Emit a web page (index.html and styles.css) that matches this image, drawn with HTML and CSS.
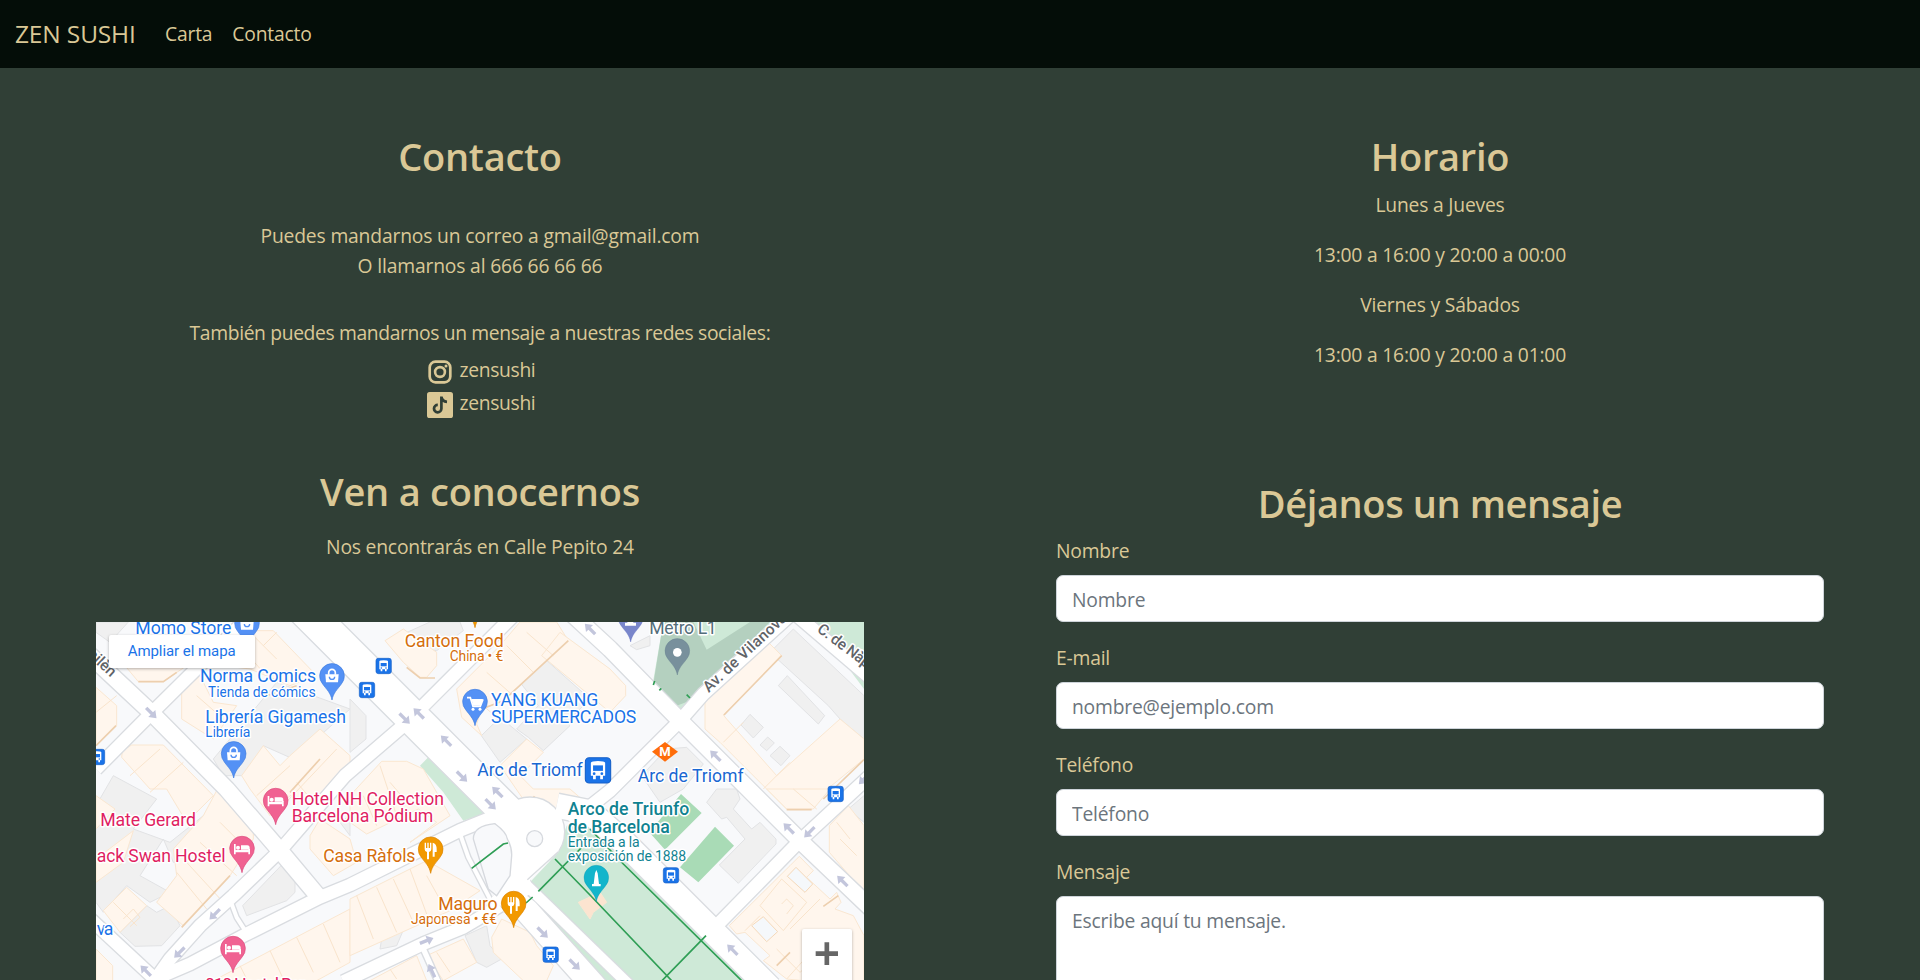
FILE: index.html
```html
<!DOCTYPE html>
<html lang="es">
<head>
<meta charset="utf-8">
<title>Zen Sushi - Contacto</title>
<link rel="stylesheet" href="styles.css">
</head>
<body>
<nav class="navbar">
  <a class="brand">ZEN SUSHI</a>
  <a class="nav-link">Carta</a>
  <a class="nav-link">Contacto</a>
</nav>
<main class="columns">
  <div class="column">
    <section class="contact">
      <h1>Contacto</h1>
      <div class="contact-lines">
        <p>Puedes mandarnos un correo a gmail@gmail.com</p>
        <p>O llamarnos al 666 66 66 66</p>
      </div>
      <p class="social-intro">También puedes mandarnos un mensaje a nuestras redes sociales:</p>
      <div class="social">
        <svg class="social-icon" viewBox="0 0 26 26"><g fill="none" stroke="#dac896"><rect x="2.7" y="2.7" width="20.6" height="20.6" rx="5.8" stroke-width="2.7"/><circle cx="13" cy="13" r="4.9" stroke-width="2.6"/></g><circle cx="19" cy="7" r="1.5" fill="#dac896"/></svg>
        <span>zensushi</span>
      </div>
      <div class="social">
        <svg class="social-icon" viewBox="0 0 26 26"><rect width="26" height="26" rx="2.6" fill="#dac896"/><path d="M14.4 4.600v12.200a3.700 3.700 0 1 1-3.600-3.900M14.400 4.800c.4 2.900 2.500 4.800 5.600 5" fill="none" stroke="#303f36" stroke-width="2.7"/></svg>
        <span>zensushi</span>
      </div>
    </section>
    <section class="visit">
      <h1>Ven a conocernos</h1>
      <p class="address">Nos encontrarás en Calle Pepito 24</p>
      <svg class="map" viewBox="18 39 2304 1074">
        <defs>
          <g id="roads" fill="none" stroke-linejoin="round">
            <path class="w40" d="M18 480L185 312L480 20"/>
            <path class="w48" d="M-20 120L185 312L410 540L570 725L688 866"/>
            <path class="w100" d="M640 -2L780 138L1017 375L1300 658"/>
            <path class="w40" d="M1280 10L1000 290L930 358L765 500L570 725L430 860L330 950L240 1050L190 1120"/>
            <path class="w40" d="M190 1112L300 1065L470 975L688 866L780 828L1110 664L1220 620"/>
            <path class="w40" d="M-10 920L200 1115"/>
            <path class="w12" d="M425 885L440 925L472 975"/>
            <path class="w40" d="M760 1118L1000 1004L1120 955L1230 890"/>
            <path class="w16" d="M1000 1020L1045 1120"/>
            <path class="w12" d="M1112 680L1135 745L1205 880"/>
            <path class="w32" d="M1290 810L1620 1130"/>
            <path class="w72" d="M1225 840L1310 905L1520 1140"/>
            <path class="w72" d="M1400 590L1500 610L1600 698L1840 938L2040 1138"/>
            <path class="w40" d="M2110 10L1840 255L1770 335L1560 545L1440 640"/>
            <path class="w48" d="M1430 0L1560 120L1770 335L2130 695L2350 905"/>
            <path class="w40" d="M2340 500L2130 695L1880 950"/>
            <path class="w40" d="M2110 10L2350 215"/>
          </g>
          <path id="pin" d="M0 0C-4 -22 -16 -31 -28 -48A37 37 0 1 1 28 -48C16 -31 4 -22 0 0Z"/>
          <g id="bag" fill="#fff"><path d="M-20 -77H20L18 -53H-18Z"/><path d="M-10 -76v-6a10 10 0 0 1 20 0v6" fill="none" stroke="#fff" stroke-width="5"/><path d="M-8 -70a8 8 0 0 0 16 0" fill="none" stroke="#5491f5" stroke-width="4"/></g>
          <g id="bed" fill="#fff"><path d="M-24 -86h5v18h38v-3h5v16h-5v-6h-38v6h-5z"/><circle cx="-12" cy="-75" r="6"/><path d="M-3 -82H16q7 0 7 8v5H-3z"/></g>
          <g id="fork" fill="#fff"><path d="M-18 -92h4v16h4v-16h4v16h4v-16h4v20q0 6 -7 8v22h-6v-22q-7 -2 -7 -8zM6 -50v-42q12 2 12 20v8h-6v14z"/></g>
          <g id="bus"><rect x="-23" y="-23" width="46" height="46" rx="7" fill="#1a73e8" stroke="#1660c8" stroke-width="2"/><path d="M-13 -14q1 -3 13 -3t13 3v24h-4v6h-5v-6h-8v6h-5v-6h-4z" fill="#fff"/><path d="M-9 -9h18v10h-18z" fill="#1a73e8"/><circle cx="-7" cy="6" r="2.5" fill="#1a73e8"/><circle cx="7" cy="6" r="2.5" fill="#1a73e8"/></g>
          <path id="arrow" d="M-22 -5H2V-15L22 0L2 15V5H-22Z" fill="#c3c6dc"/>
        </defs>
        <rect x="0" y="0" width="2340" height="1130" fill="#f8f9fb"/>

        <!-- parks -->
        <g fill="#cee9d7">
          <path d="M1015 445L990 470L1060 550L1120 635L1190 612Z"/>
          <path d="M1310 830L1400 735L1430 650L1500 630L1620 740L1995 1115H1600Z"/>
          <path d="M1300 885L1325 865L1605 1115H1520Z"/>
          <path d="M1720 39L1688 225L1770 315L2090 39Z"/>
          <path d="M2180 39H2322V240L2240 130Z"/>
        </g>
        <path d="M1720 39L1690 225L1760 290L1800 275L2040 39H1980L1850 122L1810 39Z" fill="#b4d0bf"/>
        <path d="M1773 555L1835 612L1725 722L1678 670ZM1875 653L1932 710L1825 820L1770 775Z" fill="#a9dbb6"/>

        <!-- grey buildings -->
        <g fill="#f0f0f0" stroke="#e2e3e5" stroke-width="3">
          <path d="M18 39H115L60 100L18 70Z"/>
          <path d="M370 450L560 220L780 300L690 380L610 450L520 410L460 500L400 500Z"/>
          <path d="M18 590L70 500L200 570L130 660L240 700L340 620L400 560L330 760L250 760L220 690L150 800L240 850L180 880L110 830L40 910L18 880Z"/>
          <path d="M90 970L170 890L200 910L240 890L270 950L215 1010L135 1012Z"/>
          <path d="M575 768L615 810V850L590 875L470 920L458 890Z"/>
          <path d="M780 270L828 320V390L780 430Z"/>
          <path d="M940 75L1020 39H1110L1120 65L1040 125L990 120Z"/>
          <path d="M1290 220L1365 150L1500 270L1430 340L1440 350L1360 425L1315 385L1280 360L1345 290Z"/>
          <path d="M1174 380L1230 325L1310 390L1230 460Z"/>
          <path d="M1620 110L1680 80V110L1640 122Z"/>
          <path d="M2040 130L2110 60L2322 260V390L2250 330L2215 290Z"/>
          <path d="M2092 200L2204 320L2185 345L2065 230ZM1980 316L2020 355L1990 387L1953 348ZM2033 384L2053 402L2030 425L2010 408ZM2070 412L2100 440L2073 470L2040 440Z"/>
          <path d="M1655 500L1730 420L1790 415L1840 465L1780 540L1710 580Z"/>
          <path d="M1850 580L1880 540H1940L1950 570L1930 600L1985 660L2010 640L2058 690V705L1945 823L1888 768L1965 690L1910 625L1895 630Z"/>
          <path d="M2275 600L2322 560V640Z"/>
          <path d="M740 120L745 110L780 140M750 640L780 620V680Z"/>
          <path d="M880 960L940 900L950 940L920 1010L870 1020Z"/>
          <path d="M1125 980L1190 950L1200 1010L1235 1050L1190 1075L1160 1060Z"/>
        </g>

        <!-- ochre buildings -->
        <g fill="#fff6ed" stroke="#fae7d1" stroke-width="3">
          <path d="M18 235L80 290V350L18 410Z"/>
          <path d="M105 170H290L220 218H145Z"/>
          <path d="M480 65H550L680 200L600 230L480 180L400 170Z"/>
          <path d="M275 250L330 200L370 280L440 290L370 390L275 330Z"/>
          <path d="M97 425L125 408H220L370 560L290 640L230 540L180 540L95 445Z"/>
          <path d="M455 500L520 410L570 470L600 440L690 360L780 440V500L690 570L600 560L540 620L480 540Z"/>
          <path d="M340 620L380 545L490 650V690L420 800L280 950L200 880L260 800L250 720Z"/>
          <path d="M40 905L110 835L170 890L90 970Z"/>
          <path d="M18 660L75 600L18 560ZM18 750L130 665L100 760L18 820Z"/>
          <path d="M18 1020L68 1070V1115H18Z"/>
          <path d="M660 680L690 630L780 690L800 760L730 800L660 720Z"/>
          <path d="M780 560V640L830 675L985 600L1040 640L960 700L1080 620L1000 480L950 457H875Z"/>
          <path d="M885 95L940 60L1040 130V170L1010 205H990L940 160Z"/>
          <path d="M1100 240L1230 110L1290 39H1400L1435 95L1240 275L1175 300L1160 345L1175 380L1115 325Z"/>
          <path d="M1355 140L1410 70L1560 180L1607 230V260L1560 310L1500 260Z"/>
          <path d="M1230 470L1310 390L1360 430L1290 500L1330 540H1440L1475 570L1430 600L1320 600Z"/>
          <path d="M2030 95L2075 140L1900 318L1910 330L2060 500L2250 330L2322 390V450L2200 550L2140 600H2090L2030 540L1890 400L1845 360V270Z"/>
          <path d="M370 1115L780 900V1060L680 1115Z"/>
          <path d="M780 870L1010 755L1170 845L1080 905L780 1040Z"/>
          <path d="M840 1115L980 1040L1010 1115ZM1010 1040L1120 990L1160 1060L1060 1115Z"/>
          <path d="M1205 985L1235 930L1320 970L1340 1010L1390 1070L1370 1115H1300L1210 1030Z"/>
          <path d="M1465 880L1530 850L1550 880L1510 910L1500 930Z" fill="#fce4d0"/>
          <path d="M1918 950L2100 770L2128 742L2170 785L2150 805L2220 870L2240 850L2253 880L2235 900L2290 920L2322 980V1115H2140L2090 1110L2020 1055L2040 1040L1965 970L1940 975Z"/>
          <path d="M2218 650L2275 590L2322 650V850L2218 730Z"/>
          <path d="M2030 540L2090 600H2170L2220 540Z"/>
        </g>
        <path d="M2118 775L2168 825L2145 850L2092 802ZM2020 923L2063 968L2030 998L1985 950Z" fill="#f5f8fb" stroke="#f5d9ba" stroke-width="3"/>
        <g fill="none" stroke="#f9e4cc" stroke-width="3">
          <path d="M480 70L560 150M440 100L520 190M520 110L560 70M18 310L80 260M120 500L210 420M180 550L280 460M400 330L320 260M500 560L600 470M560 610L740 420M620 520L680 590M290 760L400 880M260 790L350 900M330 700L440 800M390 640L480 730M70 880L140 950M100 930l30 -30l20 25l-30 28"/>
          <path d="M450 1070L470 1110M540 1025L580 1110M620 985L670 1090M700 945L750 1060M800 860L850 990M860 835L920 970M910 810L970 940M960 780L1010 915M1010 800L1060 890M900 1080L920 1110M1040 1030L1080 1090"/>
          <path d="M1130 245L1230 335M1190 190L1270 260M1250 110L1330 190M1310 70L1390 140M900 520L960 590M870 470L920 620M820 560L860 650M2110 540L2180 600M1900 400L1960 340M2020 540L2100 460M2010 890L2075 810L2150 880L2080 965ZM2075 885L2090 870L2110 890L2090 915M2100 960L2190 870M2060 1020L2130 1090L2200 1030M1965 965L2010 920M2090 1110L2180 1010M2240 640L2280 690M2250 690L2300 740"/>
        </g>
        <g fill="none" stroke="#edcfae" stroke-width="5">
          <path d="M145 218H220L260 190M530 260L620 230M600 550L690 450M275 955L420 800M1175 300L1240 275L1435 95M950 175L990 207H1035M1902 318L2075 140M2200 570L2322 452M2090 602H2165M18 410L78 350M1330 562L1380 600H1440M2060 1070L2100 1030M2200 892L2245 860"/>
        </g>

        <!-- streets -->
        <use href="#roads" class="road-edge"/>
        <circle cx="1320" cy="668" r="104" fill="#fff" stroke="#d9dce0" stroke-width="4"/>
        <use href="#roads" class="road-fill"/>
        <path d="M1225 640H1400L1405 730L1320 812L1330 850L1260 890L1220 860L1255 800Z" fill="#fff"/>
        <path d="M1405 728L1312 812" stroke="#d9dce0" stroke-width="4"/>
        <path d="M1150 690Q1150 650 1215 644Q1250 670 1252 690Q1266 715 1265 740L1260 800L1220 860L1195 840Z" fill="#f8f9fb" stroke="#d6d9de" stroke-width="4"/>
        <circle cx="1334" cy="689" r="24" fill="#f8f9fb" stroke="#d6d9de" stroke-width="4"/>
        <path d="M1145 778L1240 705L1254 702M1308 882L1328 864M1345 847L1500 690M1395 750L1500 858L1745 1115M1500 660L1600 765L1955 1115M1716 1115L1848 980M1690 228l4 -12M1708 244l6 -6M1790 257l10 10" fill="none" stroke="#2f9e55" stroke-width="5"/>

        <!-- traffic direction -->
        <use href="#arrow" transform="translate(184 312) rotate(45)"/>
        <use href="#arrow" transform="translate(944 329) rotate(45)"/>
        <use href="#arrow" transform="translate(986 313) rotate(225)"/>
        <use href="#arrow" transform="translate(1068 395) rotate(225)"/>
        <use href="#arrow" transform="translate(1116 503) rotate(45)"/>
        <use href="#arrow" transform="translate(1222 549) rotate(225)"/>
        <use href="#arrow" transform="translate(1202 586) rotate(45)"/>
        <use href="#arrow" transform="translate(1500 60) rotate(225)"/>
        <use href="#arrow" transform="translate(1876 440) rotate(225)"/>
        <use href="#arrow" transform="translate(2096 658) rotate(225)"/>
        <use href="#arrow" transform="translate(2158 670) rotate(135)"/>
        <use href="#arrow" transform="translate(2257 816) rotate(225)"/>
        <use href="#arrow" transform="translate(1927 1022) rotate(225)"/>
        <use href="#arrow" transform="translate(2322 510) rotate(135)"/>
        <use href="#arrow" transform="translate(374 916) rotate(135)"/>
        <use href="#arrow" transform="translate(268 1031) rotate(135)"/>
        <use href="#arrow" transform="translate(167 1085) rotate(225)"/>
        <use href="#arrow" transform="translate(1010 995) rotate(-22)"/>
        <use href="#arrow" transform="translate(1025 1085) rotate(245)"/>
        <use href="#arrow" transform="translate(1358 971) rotate(45)"/>
        <use href="#arrow" transform="translate(1454 1067) rotate(45)"/>

        <!-- markers -->
        <g fill="#5491f5" stroke="#3f7de0" stroke-width="2">
          <use href="#pin" x="471" y="115"/><use href="#pin" x="726" y="273"/><use href="#pin" x="431" y="507"/><use href="#pin" x="1155" y="350"/>
        </g>
        <use href="#bag" x="471" y="115"/><use href="#bag" x="726" y="273"/><use href="#bag" x="431" y="507"/>
        <path d="M1131 266h10l8 26h22l7 -18h-33" fill="none" stroke="#fff" stroke-width="5"/><path d="M1144 270h35l-7 20h-22z" fill="#fff"/><circle cx="1149" cy="301" r="4.500" fill="#fff"/><circle cx="1170" cy="301" r="4.500" fill="#fff"/>
        <use href="#pin" x="1622" y="99" fill="#7986cb" stroke="#5c6bc0"/>
        <path d="M1605 50h33v-9h-8v-8h-18v8h-7z" fill="#fff"/>
        <use href="#pin" x="1762" y="198" fill="#78909c" stroke="#607d8b"/><circle cx="1762" cy="130" r="13" fill="#fff"/>
        <g fill="#f06292" stroke="#db4a7b" stroke-width="2"><use href="#pin" x="557" y="647"/><use href="#pin" x="456" y="791"/><use href="#pin" x="429" y="1091"/></g>
        <use href="#bed" x="557" y="647"/><use href="#bed" x="456" y="791"/><use href="#bed" x="429" y="1091"/>
        <g fill="#f29900" stroke="#d98200" stroke-width="2"><use href="#pin" x="1022" y="793"/><use href="#pin" x="1271" y="956"/><use href="#pin" x="1155" y="56"/></g>
        <use href="#fork" x="1022" y="793"/><use href="#fork" x="1271" y="956"/>
        <use href="#pin" x="1519" y="878" fill="#12b5cb" stroke="#0d99ad"/>
        <path d="M1506 832v-7h5l4 -32l4 -10l4 10l4 32h5v7z" fill="#fff"/>
        <use href="#bus" x="881" y="171"/><use href="#bus" x="831" y="243"/><use href="#bus" x="21" y="444"/><use href="#bus" x="2237" y="555"/><use href="#bus" x="1743" y="799"/><use href="#bus" x="1382" y="1037"/>
        <g transform="translate(1524 484) scale(1.650)"><use href="#bus"/></g>
        <path d="M1725 399L1764 428L1725 458L1686 428Z" fill="#ff6d0a"/>
        <text x="1708" y="442" class="metro" textLength="34" lengthAdjust="spacingAndGlyphs">M</text>

        <!-- labels -->
        <g class="label blue">
          <text x="136" y="75" textLength="288">Momo Store</text>
          <text x="330" y="220" textLength="348">Norma Comics</text>
          <text x="354" y="263" textLength="323" class="small">Tienda de cómics</text>
          <text x="346" y="341" textLength="422">Librería Gigamesh</text>
          <text x="346" y="384" textLength="135" class="small">Librería</text>
          <text x="1203" y="290" textLength="322">YANG KUANG</text>
          <text x="1203" y="342" textLength="436">SUPERMERCADOS</text>
          <text x="20" y="978" textLength="50">va</text>
        </g>
        <g class="label transit">
          <text x="1162" y="502" textLength="316">Arc de Triomf</text>
          <text x="1643" y="518" textLength="318">Arc de Triomf</text>
        </g>
        <g class="label orange">
          <text x="944" y="113" textLength="297">Canton Food</text>
          <text x="1079" y="156" textLength="161" class="small">China • €</text>
          <text x="700" y="759" textLength="276">Casa Ràfols</text>
          <text x="1045" y="903" textLength="178">Maguro</text>
          <text x="963" y="944" textLength="258" class="small">Japonesa • €€</text>
        </g>
        <g class="label pink">
          <text x="605" y="587" textLength="457">Hotel NH Collection</text>
          <text x="605" y="639" textLength="425">Barcelona Pódium</text>
          <text x="31" y="652" textLength="287">Mate Gerard</text>
          <text x="20" y="758" textLength="387">ack Swan Hostel</text>
          <text x="345" y="1147" textLength="310">010 Hostal Bcn</text>
        </g>
        <g class="label teal">
          <text x="1433" y="618" textLength="365">Arco de Triunfo</text>
          <text x="1433" y="671" textLength="306">de Barcelona</text>
          <text x="1433" y="713" textLength="216" class="small">Entrada a la</text>
          <text x="1433" y="755" textLength="355" class="small">exposición de 1888</text>
        </g>
        <g class="label slate">
          <text x="1678" y="75" textLength="202">Metro L1</text>
          <text transform="translate(1856 252) rotate(-43)" class="street" textLength="325">Av. de Vilanova</text>
          <text transform="translate(2179 66) rotate(37)" class="street" textLength="245">C. de Nàpols</text>
          <text transform="translate(-30 120) rotate(43)" class="street" textLength="126">Bailèn</text>
        </g>

        <!-- controls -->
        <g class="control"><rect x="57" y="78" width="438" height="99" rx="6"/><rect x="2136" y="960" width="150" height="240" rx="6"/></g>
        <text x="113" y="141" textLength="324" class="enlarge">Ampliar el mapa</text>
        <path d="M2177 1034H2244M2210.500 1000V1068" stroke="#666" stroke-width="14"/>
      </svg>
    </section>
  </div>
  <div class="column">
    <section class="hours">
      <h1>Horario</h1>
      <p>Lunes a Jueves</p>
      <p>13:00 a 16:00 y 20:00 a 00:00</p>
      <p>Viernes y Sábados</p>
      <p>13:00 a 16:00 y 20:00 a 01:00</p>
    </section>
    <form class="message">
      <h1>Déjanos un mensaje</h1>
      <label>Nombre</label>
      <input type="text" placeholder="Nombre">
      <label>E-mail</label>
      <input type="text" placeholder="nombre@ejemplo.com">
      <label>Teléfono</label>
      <input type="text" placeholder="Teléfono">
      <label>Mensaje</label>
      <textarea placeholder="Escribe aquí tu mensaje."></textarea>
    </form>
  </div>
</main>
</body>
</html>
```
FILE: styles.css
```css
* { box-sizing: border-box; }
body {
  margin: 0;
  background: #303f36;
  color: #dac896;
  font: 19.3px/30px "Open Sans", sans-serif;
  letter-spacing: -0.2px;
}
h1, p { margin: 0; }
h1 { font-size: 38px; line-height: 48px; font-weight: 600; letter-spacing: -0.25px; }

.navbar {
  display: flex;
  align-items: center;
  gap: 20px;
  height: 68px;
  padding-left: 15px;
  background: #040d08;
}
.brand { font-size: 24.5px; margin-right: 10px; width: 120px; white-space: nowrap; letter-spacing: -0.15px; }

.columns { display: flex; height: 912px; overflow: hidden; }
.column { width: 960px; padding: 64px 96px 0; text-align: center; }

.contact { height: 335px; }
.contact-lines { padding-top: 41px; letter-spacing: -0.17px; }
.social-intro { padding-top: 37px; margin-bottom: 6px; letter-spacing: -0.36px; }
.social { display: flex; justify-content: center; gap: 7px; height: 33px; padding: 1px 0 0 2px; letter-spacing: -0.35px; }
.social-icon { width: 26px; height: 26px; margin-top: 4px; }
.address { margin-top: 17px; }
.map { display: block; width: 768px; height: 358px; margin-top: 60px; }

.hours { height: 347px; }
.hours p { margin-bottom: 20px; }
.hours h1 { margin-bottom: 10px; }

.message { display: flex; flex-direction: column; text-align: left; }
.message h1 { text-align: center; margin-bottom: 9px; letter-spacing: -0.4px; }
.message label { margin-bottom: 9px; }
.message input, .message textarea {
  height: 47px;
  margin: 0 0 21px;
  padding: 8px 15px 6px;
  border: 1px solid #ced4da;
  border-radius: 7px;
  background: #fff;
  font: inherit;
  letter-spacing: inherit;
  resize: none;
}
.message textarea { height: 130px; padding-top: 9px; }
::placeholder { color: #6c757d; opacity: 1; }

.w100 { --w: 100px; }
.w72 { --w: 72px; }
.w48 { --w: 48px; }
.w40 { --w: 38px; }
.w32 { --w: 32px; }
.w16 { --w: 16px; }
.w12 { --w: 12px; }
#roads path { stroke-width: calc(var(--w) + var(--edge)); }
.road-edge { --edge: 8px; stroke: #d9dce0; }
.road-fill { --edge: 0px; stroke: #fff; }

.label { font: 53px Roboto, sans-serif; letter-spacing: 0; stroke: #fff; stroke-width: 9px; stroke-linejoin: round; paint-order: stroke; }
.small { font-size: 42px; }
.blue { fill: #1a73e8; }
.transit { fill: #1967d2; }
.orange { fill: #d56e0c; }
.pink { fill: #e01e62; }
.teal { fill: #108291; font-weight: 500; }
.teal .small { font-weight: 400; }
.slate { fill: #546e7a; }
.street { font-size: 46px; font-weight: 500; fill: #5f6368; }
.metro { font: 700 38px Roboto, sans-serif; fill: #fff; }
.enlarge { font: 45px Roboto, sans-serif; fill: #1a73e8; letter-spacing: 0; }
.control { fill: #fff; filter: drop-shadow(0 3px 5px rgba(0, 0, 0, .3)); }
```
